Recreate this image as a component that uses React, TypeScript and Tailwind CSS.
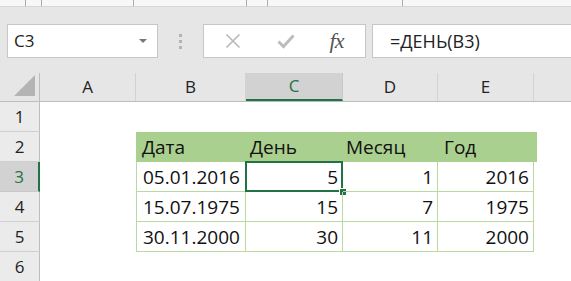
import React from 'react';

const cols = [
  { key: 'A', w: 'w-[96px]' },
  { key: 'B', w: 'w-[110px]' },
  { key: 'C', w: 'w-[97px]' },
  { key: 'D', w: 'w-[95px]' },
  { key: 'E', w: 'w-[96px]' },
];

const rows: (string | number)[][] = [
  ['05.01.2016', 5, 1, 2016],
  ['15.07.1975', 15, 7, 1975],
  ['30.11.2000', 30, 11, 2000],
];

function RowHeader({ n, active }: { n: number; active?: boolean }) {
  return (
    <div
      className={
        active
          ? 'w-[40px] h-full shrink-0 flex items-center justify-center bg-[#d2d2d2] text-[#217346] border-b border-[#c8c8c8] border-r-2 border-r-[#217346] text-[17px]'
          : 'w-[40px] h-full shrink-0 flex items-center justify-center bg-[#ebebeb] text-[#222] border-b border-[#d0d0d0] border-r border-r-[#bdbdbd] text-[17px]'
      }
    >
      {n}
    </div>
  );
}

function Toolbar() {
  return (
    <div className="h-[66px] bg-[#e6e6e6] flex items-start pt-[17px] pl-[7px]">
      {/* name box */}
      <div className="w-[151px] h-[34px] bg-white border border-[#c6c6c6] flex items-center justify-between pl-[6px] pr-[10px]">
        <span className="text-[17px] text-[#222]">C3</span>
        <span className="w-0 h-0 border-l-[4px] border-r-[4px] border-t-[4px] border-l-transparent border-r-transparent border-t-[#777]" />
      </div>
      <div className="w-[45px] h-[34px] flex flex-col items-center justify-center gap-[3px]">
        <span className="w-[3px] h-[3px] bg-[#b3b3b3]" />
        <span className="w-[3px] h-[3px] bg-[#b3b3b3]" />
        <span className="w-[3px] h-[3px] bg-[#b3b3b3]" />
      </div>
      {/* formula buttons */}
      <div className="w-[163px] h-[34px] bg-white border border-[#c6c6c6] flex items-center">
        <div className="w-[56px] flex justify-center pl-[2px]">
          <svg width="16" height="16" viewBox="0 0 16 16">
            <path d="M1.5 1.5 L14.5 14.5 M14.5 1.5 L1.5 14.5" stroke="#b8b8b8" strokeWidth="1.6" fill="none" />
          </svg>
        </div>
        <div className="w-[52px] flex justify-center">
          <svg width="18" height="16" viewBox="0 0 18 16">
            <path d="M1.5 8.5 L6.5 13.5 L16.5 2.5" stroke="#bcbcbc" strokeWidth="3" fill="none" />
          </svg>
        </div>
        <div className="flex-1 flex justify-center pr-[4px]">
          <span className="text-[22px] italic text-[#555] leading-none tracking-[-1px]" style={{ fontFamily: '"Liberation Serif", serif' }}>
            fx
          </span>
        </div>
      </div>
      <div className="w-[6px]" />
      <div className="flex-1 h-[34px] bg-white border border-r-0 border-[#c6c6c6] flex items-center pl-[17px]">
        <span className="text-[18px] text-[#222]">=ДЕНЬ(В3)</span>
      </div>
    </div>
  );
}

function TopStrip() {
  const gaps = ['w-[25px]', 'w-[15px]', 'w-[91px]', 'w-[112px]', 'w-[20px]', 'w-[134px]'];
  return (
    <div className="h-[7px] bg-[#f7f7f7] border-b border-[#d6d6d6] flex overflow-hidden">
      {gaps.map((g, i) => (
        <React.Fragment key={i}>
          <div className={g} />
          <div className="w-px h-full bg-[#aaaaaa]" />
        </React.Fragment>
      ))}
    </div>
  );
}

function ColumnHeaders() {
  return (
    <div className="h-[29px] flex bg-[#e6e6e6] border-b border-[#bdbdbd]">
      <div className="w-[40px] shrink-0 border-r border-[#bdbdbd] flex items-end justify-end pr-[4px] pb-[5px]">
        <svg width="21" height="21" viewBox="0 0 21 21">
          <path d="M21 0 L21 21 L0 21 Z" fill="#b4b4b4" />
        </svg>
      </div>
      {cols.map((c) =>
        c.key === 'C' ? (
          <div
            key={c.key}
            className={`${c.w} shrink-0 bg-[#d2d2d2] border-b-2 border-[#217346] border-r border-r-[#c8c8c8] flex items-center justify-center text-[17px] text-[#217346]`}
          >
            {c.key}
          </div>
        ) : (
          <div
            key={c.key}
            className={`${c.w} shrink-0 border-r border-[#d2d2d2] flex items-center justify-center text-[17px] text-[#222]`}
          >
            {c.key}
          </div>
        )
      )}
      <div className="flex-1" />
    </div>
  );
}

export default function App() {
  return (
    <div
      className="w-[571px] h-[281px] overflow-hidden bg-white"
      style={{ fontFamily: '"Open Sans", "Noto Sans", sans-serif' }}
    >
      <TopStrip />
      <Toolbar />
      <ColumnHeaders />

      {/* row 1 */}
      <div className="h-[30px] flex">
        <RowHeader n={1} />
      </div>

      {/* row 2: table header */}
      <div className="h-[30px] flex">
        <RowHeader n={2} />
        <div className="w-[96px] shrink-0" />
        <div className="w-[305px] shrink-0 bg-[#a9d08e] border-b border-[#a9d08e] flex text-[19px] text-[#111] leading-none">
          <div className="w-[110px] pl-[6px] flex items-end pb-[4px]">Дата</div>
          <div className="w-[97px] pl-[4px] flex items-end pb-[4px]">День</div>
          <div className="w-[96px] pl-[3px] flex items-end pb-[4px]">Месяц</div>
        </div>
        <div className="w-[96px] shrink-0 bg-[#a9d08e] border-b border-[#a9d08e] pl-[3px] flex items-end pb-[4px] text-[19px] text-[#111] leading-none">
          Год
        </div>
      </div>

      {rows.map((r, i) => (
        <div key={i} className="h-[30px] flex">
          <RowHeader n={i + 3} active={i === 0} />
          <div className="w-[96px] shrink-0" />
          <div className="w-[110px] shrink-0 border-l border-b border-r border-[#b9d9a3] pl-[6px] flex items-end pb-[4px] text-[19px] text-[#111] leading-none">
            {r[0]}
          </div>
          {r.slice(1).map((v, j) => (
            <div
              key={j}
              className={`${['w-[97px]', 'w-[95px]', 'w-[96px]'][j]} shrink-0 relative border-b border-r border-[#b9d9a3] pr-[4px] flex items-end justify-end pb-[4px] text-[19px] text-[#111] leading-none`}
            >
              {v}
              {i === 0 && j === 0 && (
                <div className="absolute -left-px -top-px -right-px -bottom-px border-2 border-[#217346]">
                  <div className="absolute -right-[6px] -bottom-[6px] w-[8px] h-[8px] bg-[#217346] border border-white" />
                </div>
              )}
            </div>
          ))}
        </div>
      ))}

      {/* row 6 */}
      <div className="h-[30px] flex">
        <RowHeader n={6} />
      </div>
    </div>
  );
}
